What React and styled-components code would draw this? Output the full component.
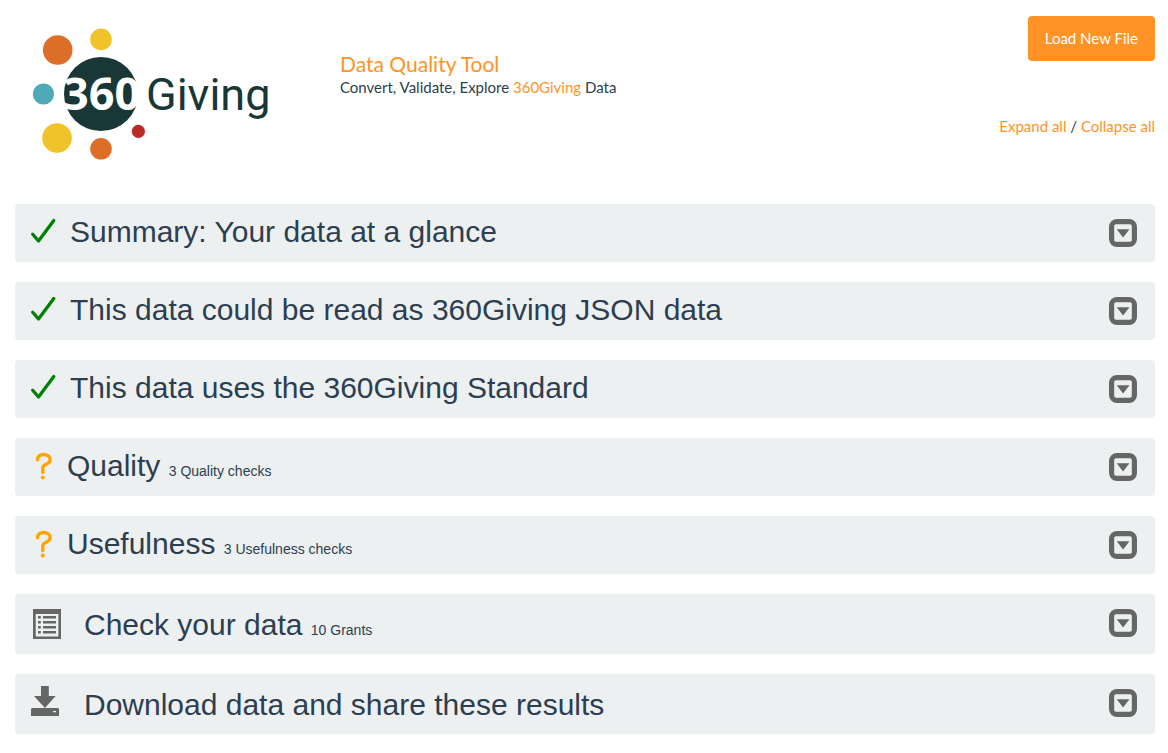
import React from "react";
import styled, { createGlobalStyle } from "styled-components";

const GlobalStyle = createGlobalStyle`
  *, *::before, *::after { box-sizing: border-box; }
  body {
    margin: 0;
    background: #fff;
    color: #2c3e50;
    font-family: Lato, "Liberation Sans", sans-serif;
    font-size: 15px;
    line-height: 21px;
  }
`;

const Page = styled.div`
  padding: 16px 13px 16px 15px;
`;

const Header = styled.header`
  display: grid;
  grid-template-columns: 325px 1fr auto;
  align-items: start;
  padding-bottom: 36px;
`;

const LogoLink = styled.a`
  display: block;
  padding: 4px 0 0 5px;
`;

const Logo = styled.svg`
  display: block;
`;

const Intro = styled.div`
  padding-top: 34px;
`;

const Title = styled.h1`
  margin: 0;
  font-size: 21px;
  font-weight: 400;
  line-height: 27px;
  color: #ff9326;
`;

const Tagline = styled.p`
  margin: 0;
`;

const Actions = styled.div`
  display: flex;
  flex-direction: column;
  align-items: flex-end;
  gap: 55px;
`;

const LoadButton = styled.button`
  height: 45px;
  padding: 0 17px;
  border: 0;
  border-radius: 4px;
  background: #ff9326;
  color: #fff;
  font: inherit;
  cursor: pointer;
`;

const Link = styled.a`
  color: #ff9326;
  text-decoration: none;
`;

const Panels = styled.main`
  display: flex;
  flex-direction: column;
  gap: 20px;
`;

const Panel = styled.section`
  display: flex;
  align-items: flex-start;
  justify-content: space-between;
  min-height: ${(p) => (p.$tall ? 60 : 58)}px;
  padding: 15px 18px 0 15px;
  border-radius: 4px;
  background: #ecf0f1;
`;

const PanelHeading = styled.div`
  display: flex;
  align-items: flex-start;
`;

const IconSlot = styled.span`
  display: block;
  width: ${(p) => p.$width}px;
  height: 30px;
`;

const PanelTitle = styled.h2`
  margin: 0;
  font-family: "Liberation Sans", Arial, sans-serif;
  font-size: 30px;
  font-weight: 400;
  line-height: ${(p) => (p.$tall ? 32 : 26)}px;
`;

const Count = styled.small`
  font-size: 14px;
`;

const Toggle = styled.button`
  display: block;
  padding: 0;
  border: 0;
  background: none;
  color: #666;
  cursor: pointer;
`;

const Glyph = styled.svg`
  display: block;
  overflow: visible;
`;

const CheckIcon = () => (
  <Glyph width="30" height="30" viewBox="0 0 30 30" aria-hidden="true">
    <path d="M2.7 15.2 8.5 22 23.8 1.6" fill="none" stroke="#008000" strokeWidth="3.3" strokeLinecap="round" strokeLinejoin="round" />
  </Glyph>
);

const QuestionIcon = () => (
  <Glyph width="30" height="30" viewBox="0 0 30 30" aria-hidden="true">
    <path d="M7.6 6.8C7.6 3.4 10 1.5 13.6 1.5S20.2 3.6 20.2 6.8C20.2 12 12.8 10.4 12.8 14.6V19.6" fill="none" stroke="#ffa500" strokeWidth="3.4" strokeLinecap="round" strokeLinejoin="round" />
    <circle cx="12.8" cy="24.6" r="2" fill="#ffa500" />
  </Glyph>
);

const ListIcon = () => (
  <Glyph width="34" height="32" viewBox="0 0 34 32" fill="#666" aria-hidden="true">
    <path fillRule="evenodd" d="M3 0H31V30H3ZM5.7 5V27.4H28.4V5Z" />
    <path d="M8 7h2.8v2.6h-2.8zM8 12h2.8v2.6h-2.8zM8 17h2.8v2.6h-2.8zM8 22h2.8v2.6h-2.8zM13 7h13v2.6h-13zM13 12h13v2.6h-13zM13 17h13v2.6h-13zM13 22h13v2.6h-13z" />
  </Glyph>
);

const DownloadIcon = () => (
  <Glyph width="34" height="32" viewBox="0 0 34 32" fill="#666" aria-hidden="true">
    <path d="M11 -3H18.8V7H25.7L14.9 19 4 7H11Z" />
    <path fillRule="evenodd" d="M2 19H28L29 20V27H1V20ZM23 22V23.3H26V22Z" />
  </Glyph>
);

const CollapseIcon = () => (
  <Glyph width="28" height="28" viewBox="0 0 28 28" aria-hidden="true">
    <path
      fill="currentColor"
      fillRule="evenodd"
      d="M8 0H20A8 8 0 0 1 28 8V20A8 8 0 0 1 20 28H8A8 8 0 0 1 0 20V8A8 8 0 0 1 8 0ZM7 5.2A1.8 1.8 0 0 0 5.2 7V21A1.8 1.8 0 0 0 7 22.8H21A1.8 1.8 0 0 0 22.8 21V7A1.8 1.8 0 0 0 21 5.2Z"
    />
    <path d="M7.7 10.2H20.5L14.1 18.4Z" fill="currentColor" />
  </Glyph>
);

const GivingLogo = () => (
  <Logo width="250" height="148" viewBox="20 20 250 148" role="img" aria-label="360Giving">
    <circle cx="101" cy="94" r="37" fill="#183736" />
    <circle cx="57.7" cy="50" r="14.8" fill="#dd6e27" />
    <circle cx="101" cy="39.4" r="10.8" fill="#efc329" />
    <circle cx="43.5" cy="94" r="10.6" fill="#4daab6" />
    <circle cx="57" cy="138" r="14.8" fill="#efc329" />
    <circle cx="101" cy="148.8" r="10.8" fill="#dd6e27" />
    <circle cx="138.4" cy="131.4" r="6.6" fill="#ba2a26" />
    <text x="63" y="110" fontFamily="'Noto Sans', sans-serif" fontWeight="700" fontSize="45" fill="#fff">360</text>
    <text x="146" y="110" fontFamily="Roboto, sans-serif" fontSize="45" fill="#183736">Giving</text>
  </Logo>
);

const panels = [
  { title: "Summary: Your data at a glance", Icon: CheckIcon, slot: 40 },
  { title: "This data could be read as 360Giving JSON data", Icon: CheckIcon, slot: 40 },
  { title: "This data uses the 360Giving Standard", Icon: CheckIcon, slot: 40 },
  { title: "Quality", count: "3 Quality checks", Icon: QuestionIcon, slot: 37 },
  { title: "Usefulness", count: "3 Usefulness checks", Icon: QuestionIcon, slot: 37 },
  { title: "Check your data", count: "10 Grants", Icon: ListIcon, slot: 54, tall: true },
  { title: "Download data and share these results", Icon: DownloadIcon, slot: 54, tall: true },
];

export default function App() {
  return (
    <>
      <GlobalStyle />
      <Page>
        <Header>
          <LogoLink href="#home">
            <GivingLogo />
          </LogoLink>
          <Intro>
            <Title>Data Quality Tool</Title>
            <Tagline>
              Convert, Validate, Explore <Link href="#360giving">360Giving</Link> Data
            </Tagline>
          </Intro>
          <Actions>
            <LoadButton type="button">Load New File</LoadButton>
            <div>
              <Link href="#expand">Expand all</Link> / <Link href="#collapse">Collapse all</Link>
            </div>
          </Actions>
        </Header>
        <Panels>
          {panels.map(({ title, count, Icon, slot, tall }) => (
            <Panel key={title} $tall={tall}>
              <PanelHeading>
                <IconSlot $width={slot}>
                  <Icon />
                </IconSlot>
                <PanelTitle $tall={tall}>
                  {title}
                  {count && <> <Count>{count}</Count></>}
                </PanelTitle>
              </PanelHeading>
              <Toggle type="button" aria-label={`Expand ${title}`}>
                <CollapseIcon />
              </Toggle>
            </Panel>
          ))}
        </Panels>
      </Page>
    </>
  );
}
